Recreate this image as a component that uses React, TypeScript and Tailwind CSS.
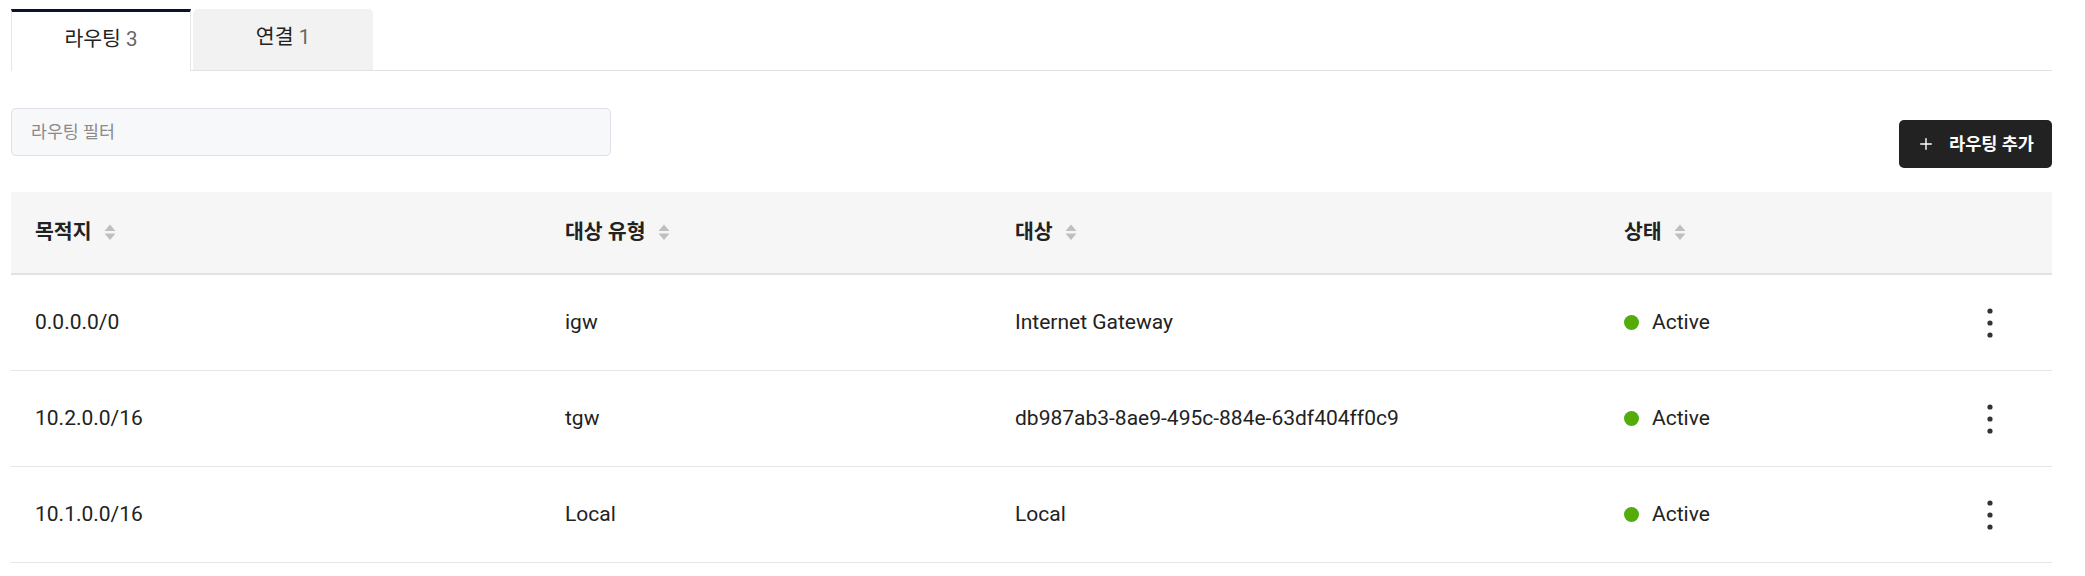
import { Plus } from "lucide-react";

type Route = {
  destination: string;
  targetType: string;
  target: string;
  status: string;
};

const routes: Route[] = [
  { destination: "0.0.0.0/0", targetType: "igw", target: "Internet Gateway", status: "Active" },
  { destination: "10.2.0.0/16", targetType: "tgw", target: "db987ab3-8ae9-495c-884e-63df404ff0c9", status: "Active" },
  { destination: "10.1.0.0/16", targetType: "Local", target: "Local", status: "Active" },
];

const columns = ["목적지", "대상 유형", "대상", "상태"];

function SortIcon() {
  return (
    <svg width="12" height="17" viewBox="0 0 12 17" className="ml-[12px] shrink-0">
      <polygon points="6,0.5 11.5,7 0.5,7" fill="#bfbfbf" />
      <polygon points="0.5,9.5 11.5,9.5 6,16" fill="#bfbfbf" />
    </svg>
  );
}

function MoreIcon() {
  return (
    <svg width="8" height="32" viewBox="0 0 8 32">
      <circle cx="4" cy="4" r="2.6" fill="#333" />
      <circle cx="4" cy="16" r="2.6" fill="#333" />
      <circle cx="4" cy="28" r="2.6" fill="#333" />
    </svg>
  );
}

export default function App() {
  return (
    <div className="w-[2085px] h-[576px] bg-white pl-[11px] pr-[33px] pt-[9px] font-[Roboto,'Noto_Sans_CJK_KR',sans-serif] text-[#222]">
      {/* Tabs */}
      <div className="flex items-end border-b border-[#e3e3e3]">
        <button className="w-[180px] h-[62px] border-t-[3px] border-t-[#0b1230] border-x border-x-[#e6e6e6] bg-white text-[20.5px] -mb-px pb-[4px]">
          라우팅 <span className="text-[#666]">3</span>
        </button>
        <button className="ml-[2px] w-[180px] h-[61px] rounded-t-[5px] bg-[#f2f2f2] text-[20.5px] pb-[4px]">
          연결 <span className="text-[#666]">1</span>
        </button>
      </div>

      {/* Toolbar */}
      <div className="flex justify-between mt-[37px]">
        <input
          className="w-[600px] h-[48px] rounded-[5px] border border-[#dde0e6] bg-[#f7f8fa] px-[19px] text-[17.3px] placeholder:text-[#8a8a8a] outline-none"
          placeholder="라우팅 필터"
        />
        <button className="mt-[12px] h-[48px] w-[153px] rounded-[5px] bg-[#222] text-white text-[17.5px] font-bold flex items-center justify-center gap-[14px]">
          <Plus size={18} strokeWidth={1.9} />
          라우팅 추가
        </button>
      </div>

      {/* Table */}
      <div className="mt-[24px]">
        <div className="grid grid-cols-[530px_450px_609px_1fr_125px] h-[83px] bg-[#f6f6f6] border-b-2 border-[#e2e2e2]">
          {columns.map((c) => (
            <div key={c} className="flex items-center px-[24px] text-[20.5px] font-bold">
              {c}
              <SortIcon />
            </div>
          ))}
          <div />
        </div>
        {routes.map((r) => (
          <div
            key={r.destination}
            className="grid grid-cols-[530px_450px_609px_1fr_125px] h-[96px] border-b border-[#e5e5e5] text-[21px]"
          >
            <div className="flex items-center px-[24px]">{r.destination}</div>
            <div className="flex items-center px-[24px]">{r.targetType}</div>
            <div className="flex items-center px-[24px]">{r.target}</div>
            <div className="flex items-center px-[24px] gap-[13px]">
              <span className="w-[15px] h-[15px] rounded-full bg-[#56ab0c]" />
              {r.status}
            </div>
            <div className="flex items-center justify-center">
              <MoreIcon />
            </div>
          </div>
        ))}
      </div>
    </div>
  );
}
